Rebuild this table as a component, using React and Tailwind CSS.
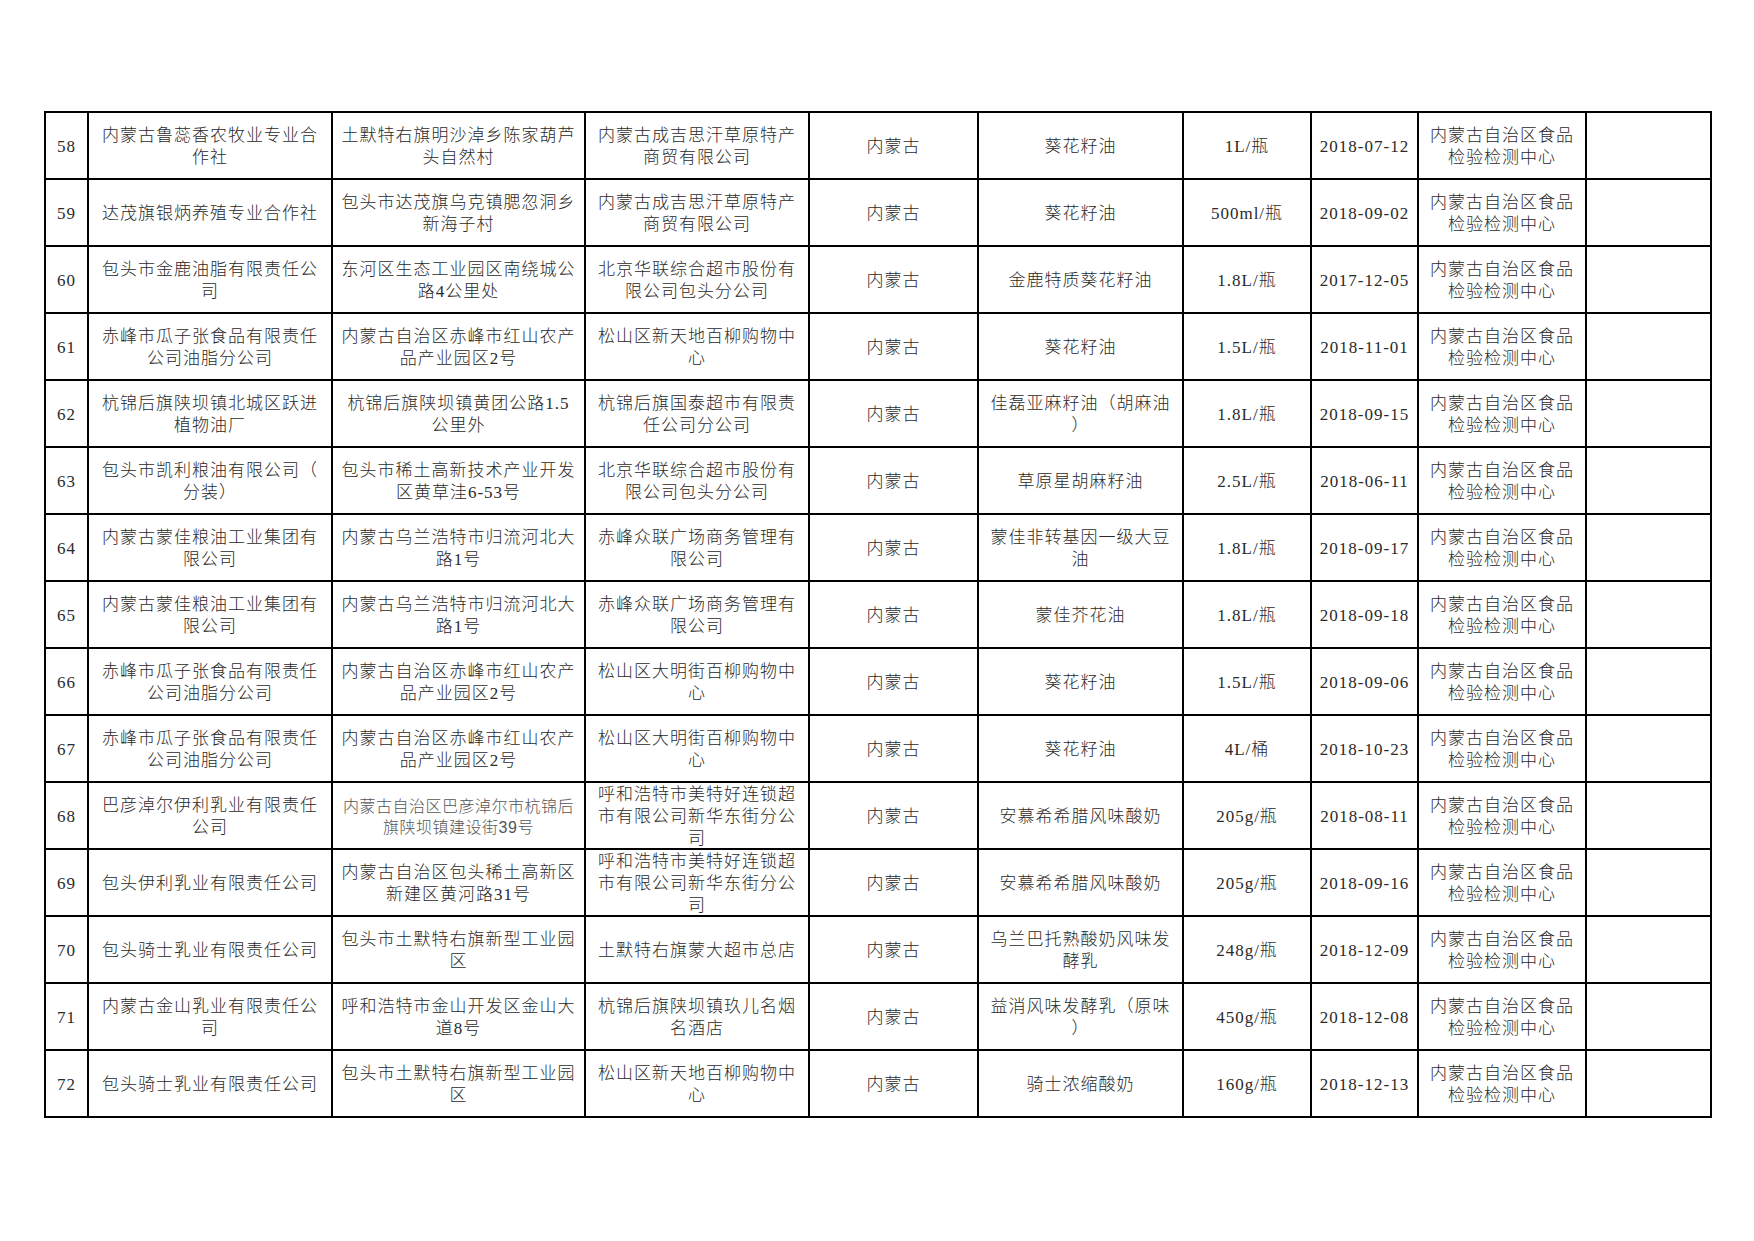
import React from 'react';

const cols = [
  'w-[43px]',
  'w-[244px]',
  'w-[253px]',
  'w-[224px]',
  'w-[169px]',
  'w-[205px]',
  'w-[128px]',
  'w-[107px]',
  'w-[168px]',
  'w-[125px]',
];

const lab = '内蒙古自治区食品\n检验检测中心';

const rows = [
  ['58', '内蒙古鲁蕊香农牧业专业合\n作社', '土默特右旗明沙淖乡陈家葫芦\n头自然村', '内蒙古成吉思汗草原特产\n商贸有限公司', '葵花籽油', '1L/瓶', '2018-07-12'],
  ['59', '达茂旗银炳养殖专业合作社', '包头市达茂旗乌克镇腮忽洞乡\n新海子村', '内蒙古成吉思汗草原特产\n商贸有限公司', '葵花籽油', '500ml/瓶', '2018-09-02'],
  ['60', '包头市金鹿油脂有限责任公\n司', '东河区生态工业园区南绕城公\n路4公里处', '北京华联综合超市股份有\n限公司包头分公司', '金鹿特质葵花籽油', '1.8L/瓶', '2017-12-05'],
  ['61', '赤峰市瓜子张食品有限责任\n公司油脂分公司', '内蒙古自治区赤峰市红山农产\n品产业园区2号', '松山区新天地百柳购物中\n心', '葵花籽油', '1.5L/瓶', '2018-11-01'],
  ['62', '杭锦后旗陕坝镇北城区跃进\n植物油厂', '杭锦后旗陕坝镇黄团公路1.5\n公里外', '杭锦后旗国泰超市有限责\n任公司分公司', '佳磊亚麻籽油（胡麻油\n）', '1.8L/瓶', '2018-09-15'],
  ['63', '包头市凯利粮油有限公司（\n分装）', '包头市稀土高新技术产业开发\n区黄草洼6-53号', '北京华联综合超市股份有\n限公司包头分公司', '草原星胡麻籽油', '2.5L/瓶', '2018-06-11'],
  ['64', '内蒙古蒙佳粮油工业集团有\n限公司', '内蒙古乌兰浩特市归流河北大\n路1号', '赤峰众联广场商务管理有\n限公司', '蒙佳非转基因一级大豆\n油', '1.8L/瓶', '2018-09-17'],
  ['65', '内蒙古蒙佳粮油工业集团有\n限公司', '内蒙古乌兰浩特市归流河北大\n路1号', '赤峰众联广场商务管理有\n限公司', '蒙佳芥花油', '1.8L/瓶', '2018-09-18'],
  ['66', '赤峰市瓜子张食品有限责任\n公司油脂分公司', '内蒙古自治区赤峰市红山农产\n品产业园区2号', '松山区大明街百柳购物中\n心', '葵花籽油', '1.5L/瓶', '2018-09-06'],
  ['67', '赤峰市瓜子张食品有限责任\n公司油脂分公司', '内蒙古自治区赤峰市红山农产\n品产业园区2号', '松山区大明街百柳购物中\n心', '葵花籽油', '4L/桶', '2018-10-23'],
  ['68', '巴彦淖尔伊利乳业有限责任\n公司', '内蒙古自治区巴彦淖尔市杭锦后\n旗陕坝镇建设街39号', '呼和浩特市美特好连锁超\n市有限公司新华东街分公\n司', '安慕希希腊风味酸奶', '205g/瓶', '2018-08-11'],
  ['69', '包头伊利乳业有限责任公司', '内蒙古自治区包头稀土高新区\n新建区黄河路31号', '呼和浩特市美特好连锁超\n市有限公司新华东街分公\n司', '安慕希希腊风味酸奶', '205g/瓶', '2018-09-16'],
  ['70', '包头骑士乳业有限责任公司', '包头市土默特右旗新型工业园\n区', '土默特右旗蒙大超市总店', '乌兰巴托熟酸奶风味发\n酵乳', '248g/瓶', '2018-12-09'],
  ['71', '内蒙古金山乳业有限责任公\n司', '呼和浩特市金山开发区金山大\n道8号', '杭锦后旗陕坝镇玖儿名烟\n名酒店', '益消风味发酵乳（原味\n）', '450g/瓶', '2018-12-08'],
  ['72', '包头骑士乳业有限责任公司', '包头市土默特右旗新型工业园\n区', '松山区新天地百柳购物中\n心', '骑士浓缩酸奶', '160g/瓶', '2018-12-13'],
];

const Cell = ({ w, children, small }) => (
  <div
    className={`${w} h-[67px] shrink-0 border-r-2 border-b-2 border-black flex items-center justify-center px-[6px] pt-[2px] text-center whitespace-pre-line ${
      small
        ? "text-[16px] leading-[21px] tracking-[0.5px] text-[#555] font-['Liberation_Sans','Noto_Sans_CJK_SC',sans-serif]"
        : 'text-[17px] leading-[22px] tracking-[1px] text-[#2a2a2a]'
    }`}
  >
    {children}
  </div>
);

export default function App() {
  return (
    <div className="w-[1754px] h-[1241px] bg-white pt-[111px] pl-[44px] font-['Liberation_Serif','Noto_Sans_CJK_SC',serif] font-light">
      <div className="inline-flex flex-col border-l-2 border-t-2 border-black">
        {rows.map((r) => (
          <div key={r[0]} className="flex">
            <Cell w={cols[0]}>{r[0]}</Cell>
            <Cell w={cols[1]}>{r[1]}</Cell>
            <Cell w={cols[2]} small={r[0] === '68'}>{r[2]}</Cell>
            <Cell w={cols[3]}>{r[3]}</Cell>
            <Cell w={cols[4]}>内蒙古</Cell>
            <Cell w={cols[5]}>{r[4]}</Cell>
            <Cell w={cols[6]}>{r[5]}</Cell>
            <Cell w={cols[7]}>{r[6]}</Cell>
            <Cell w={cols[8]}>{lab}</Cell>
            <Cell w={cols[9]}></Cell>
          </div>
        ))}
      </div>
    </div>
  );
}
